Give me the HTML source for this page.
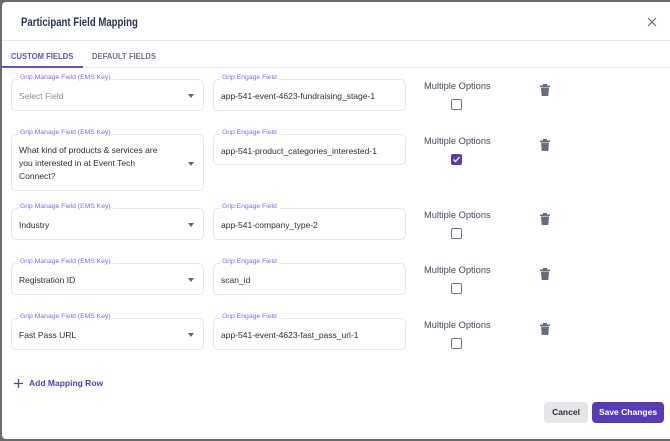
<!DOCTYPE html>
<html><head><style>
*{box-sizing:border-box;margin:0;padding:0}
body{width:670px;height:441px;background:#6b6b6b;font-family:"Liberation Sans",sans-serif;position:relative;overflow:hidden}
.m{position:absolute;left:2px;top:2px;width:668px;height:437px;background:#fff;border-radius:4px 0 0 4px}
.t{position:absolute;left:19px;top:13px;font-size:12px;font-weight:bold;color:#2b3451;transform:scaleX(.8);transform-origin:left}
.x{position:absolute;left:645px;top:15px}
.hl{position:absolute;left:0;right:0;top:38px;border-top:1px solid #e8e8ee}
.tl{position:absolute;left:0;right:0;top:65px;border-top:1px solid #e8e8ee}
.tab{position:absolute;top:49px;font-size:8.5px;font-weight:bold;transform:scaleX(.9);transform-origin:left}
.ul{position:absolute;left:0;width:81px;top:64px;height:2px;background:#6b4fbf}
.box{position:absolute;border:1px solid #e6e6ec;border-radius:5px;font-size:8.5px;color:#2d2d38}
.box .lb{position:absolute;top:-6px;left:6px;background:#fff;padding:0 2px;font-size:6.8px;color:#8a63f0}
.box .v{position:absolute;left:7px}
.arr{position:absolute;right:9px;width:0;height:0;border-left:3.5px solid transparent;border-right:3.5px solid transparent;border-top:4px solid #666}
.mo{position:absolute;font-size:9.3px;color:#454a5e}
.cb{position:absolute;width:11px;height:11px;border:1.5px solid #6c7185;border-radius:2px}
.tr{position:absolute}
</style></head><body>
<div class="m">
<div class="t">Participant Field Mapping</div>
<svg class="x" width="10" height="10" viewBox="0 0 10 10"><path d="M1 1L9 9M9 1L1 9" stroke="#666c80" stroke-width="1.2"/></svg>
<div class="hl"></div>
<div class="tab" style="left:9px;color:#6b4fbf">CUSTOM FIELDS</div>
<div class="tab" style="left:90px;color:#717586">DEFAULT FIELDS</div>
<div class="tl"></div><div class="ul"></div>
</div>
<div class="box" style="left:11px;top:79px;width:193px;height:32px"><span class="lb">Grip Manage Field (EMS Key)</span><span class="v" style="top:11px;color:#8a8d99">Select Field</span><span class="arr" style="top:14px"></span></div>
<div class="box" style="left:213px;top:79px;width:193px;height:32px"><span class="lb">Grip Engage Field</span><span class="v" style="top:11px">app-541-event-4623-fundraising_stage-1</span></div>
<div class="mo" style="left:424px;top:81px">Multiple Options</div>
<div class="cb" style="left:451px;top:99px"></div>
<div class="box" style="left:11px;top:134px;width:193px;height:57px"><span class="lb">Grip Manage Field (EMS Key)</span><span class="v" style="top:9px;line-height:13px;width:150px">What kind of products &amp; services are you interested in at Event Tech Connect?</span><span class="arr" style="top:27px"></span></div>
<div class="box" style="left:213px;top:134px;width:193px;height:31px"><span class="lb">Grip Engage Field</span><span class="v" style="top:11px">app-541-product_categories_interested-1</span></div>
<div class="mo" style="left:424px;top:136px">Multiple Options</div>
<div class="cb" style="left:451px;top:154px;background:#5b3bb5;border-color:#5b3bb5"><svg width="9" height="9" viewBox="0 0 9 9" style="position:absolute;left:0;top:0"><path d="M1.5 4.5L3.5 6.5L7.5 2" stroke="#fff" stroke-width="1.3" fill="none"/></svg></div>
<div class="box" style="left:11px;top:208px;width:193px;height:32px"><span class="lb">Grip Manage Field (EMS Key)</span><span class="v" style="top:11px">Industry</span><span class="arr" style="top:14px"></span></div>
<div class="box" style="left:213px;top:208px;width:193px;height:32px"><span class="lb">Grip Engage Field</span><span class="v" style="top:11px">app-541-company_type-2</span></div>
<div class="mo" style="left:424px;top:210px">Multiple Options</div>
<div class="cb" style="left:451px;top:228px"></div>
<div class="box" style="left:11px;top:263px;width:193px;height:32px"><span class="lb">Grip Manage Field (EMS Key)</span><span class="v" style="top:11px">Registration ID</span><span class="arr" style="top:14px"></span></div>
<div class="box" style="left:213px;top:263px;width:193px;height:32px"><span class="lb">Grip Engage Field</span><span class="v" style="top:11px">scan_id</span></div>
<div class="mo" style="left:424px;top:265px">Multiple Options</div>
<div class="cb" style="left:451px;top:283px"></div>
<div class="box" style="left:11px;top:318px;width:193px;height:32px"><span class="lb">Grip Manage Field (EMS Key)</span><span class="v" style="top:11px">Fast Pass URL</span><span class="arr" style="top:14px"></span></div>
<div class="box" style="left:213px;top:318px;width:193px;height:32px"><span class="lb">Grip Engage Field</span><span class="v" style="top:11px">app-541-event-4623-fast_pass_url-1</span></div>
<div class="mo" style="left:424px;top:320px">Multiple Options</div>
<div class="cb" style="left:451px;top:338px"></div>
<svg class="tr" style="left:540px;top:84px" width="10" height="12" viewBox="0 0 10 12"><path d="M0 1.5H10V3H0ZM3 0H7V1.5H3ZM1 3.5H9L8.3 12H1.7Z" fill="#666c80"/></svg>
<svg class="tr" style="left:540px;top:139px" width="10" height="12" viewBox="0 0 10 12"><path d="M0 1.5H10V3H0ZM3 0H7V1.5H3ZM1 3.5H9L8.3 12H1.7Z" fill="#666c80"/></svg>
<svg class="tr" style="left:540px;top:213px" width="10" height="12" viewBox="0 0 10 12"><path d="M0 1.5H10V3H0ZM3 0H7V1.5H3ZM1 3.5H9L8.3 12H1.7Z" fill="#666c80"/></svg>
<svg class="tr" style="left:540px;top:268px" width="10" height="12" viewBox="0 0 10 12"><path d="M0 1.5H10V3H0ZM3 0H7V1.5H3ZM1 3.5H9L8.3 12H1.7Z" fill="#666c80"/></svg>
<svg class="tr" style="left:540px;top:323px" width="10" height="12" viewBox="0 0 10 12"><path d="M0 1.5H10V3H0ZM3 0H7V1.5H3ZM1 3.5H9L8.3 12H1.7Z" fill="#666c80"/></svg>
<svg style="position:absolute;left:14px;top:379px" width="9" height="9" viewBox="0 0 9 9"><path d="M4.5 0V9M0 4.5H9" stroke="#5b3bb5" stroke-width="1.2"/></svg>
<div style="position:absolute;left:29px;top:378px;font-size:8.5px;font-weight:bold;color:#5b3bb5">Add Mapping Row</div>
<div style="position:absolute;left:544px;top:402px;width:44px;height:21px;background:#e6e6e8;border-radius:4px;font-size:8.5px;font-weight:bold;color:#2d2d38;text-align:center;line-height:21px">Cancel</div>
<div style="position:absolute;left:592px;top:402px;width:72px;height:21px;background:#5b3bb5;border-radius:4px;font-size:8.5px;font-weight:bold;color:#fff;text-align:center;line-height:21px">Save Changes</div>
</body></html>
